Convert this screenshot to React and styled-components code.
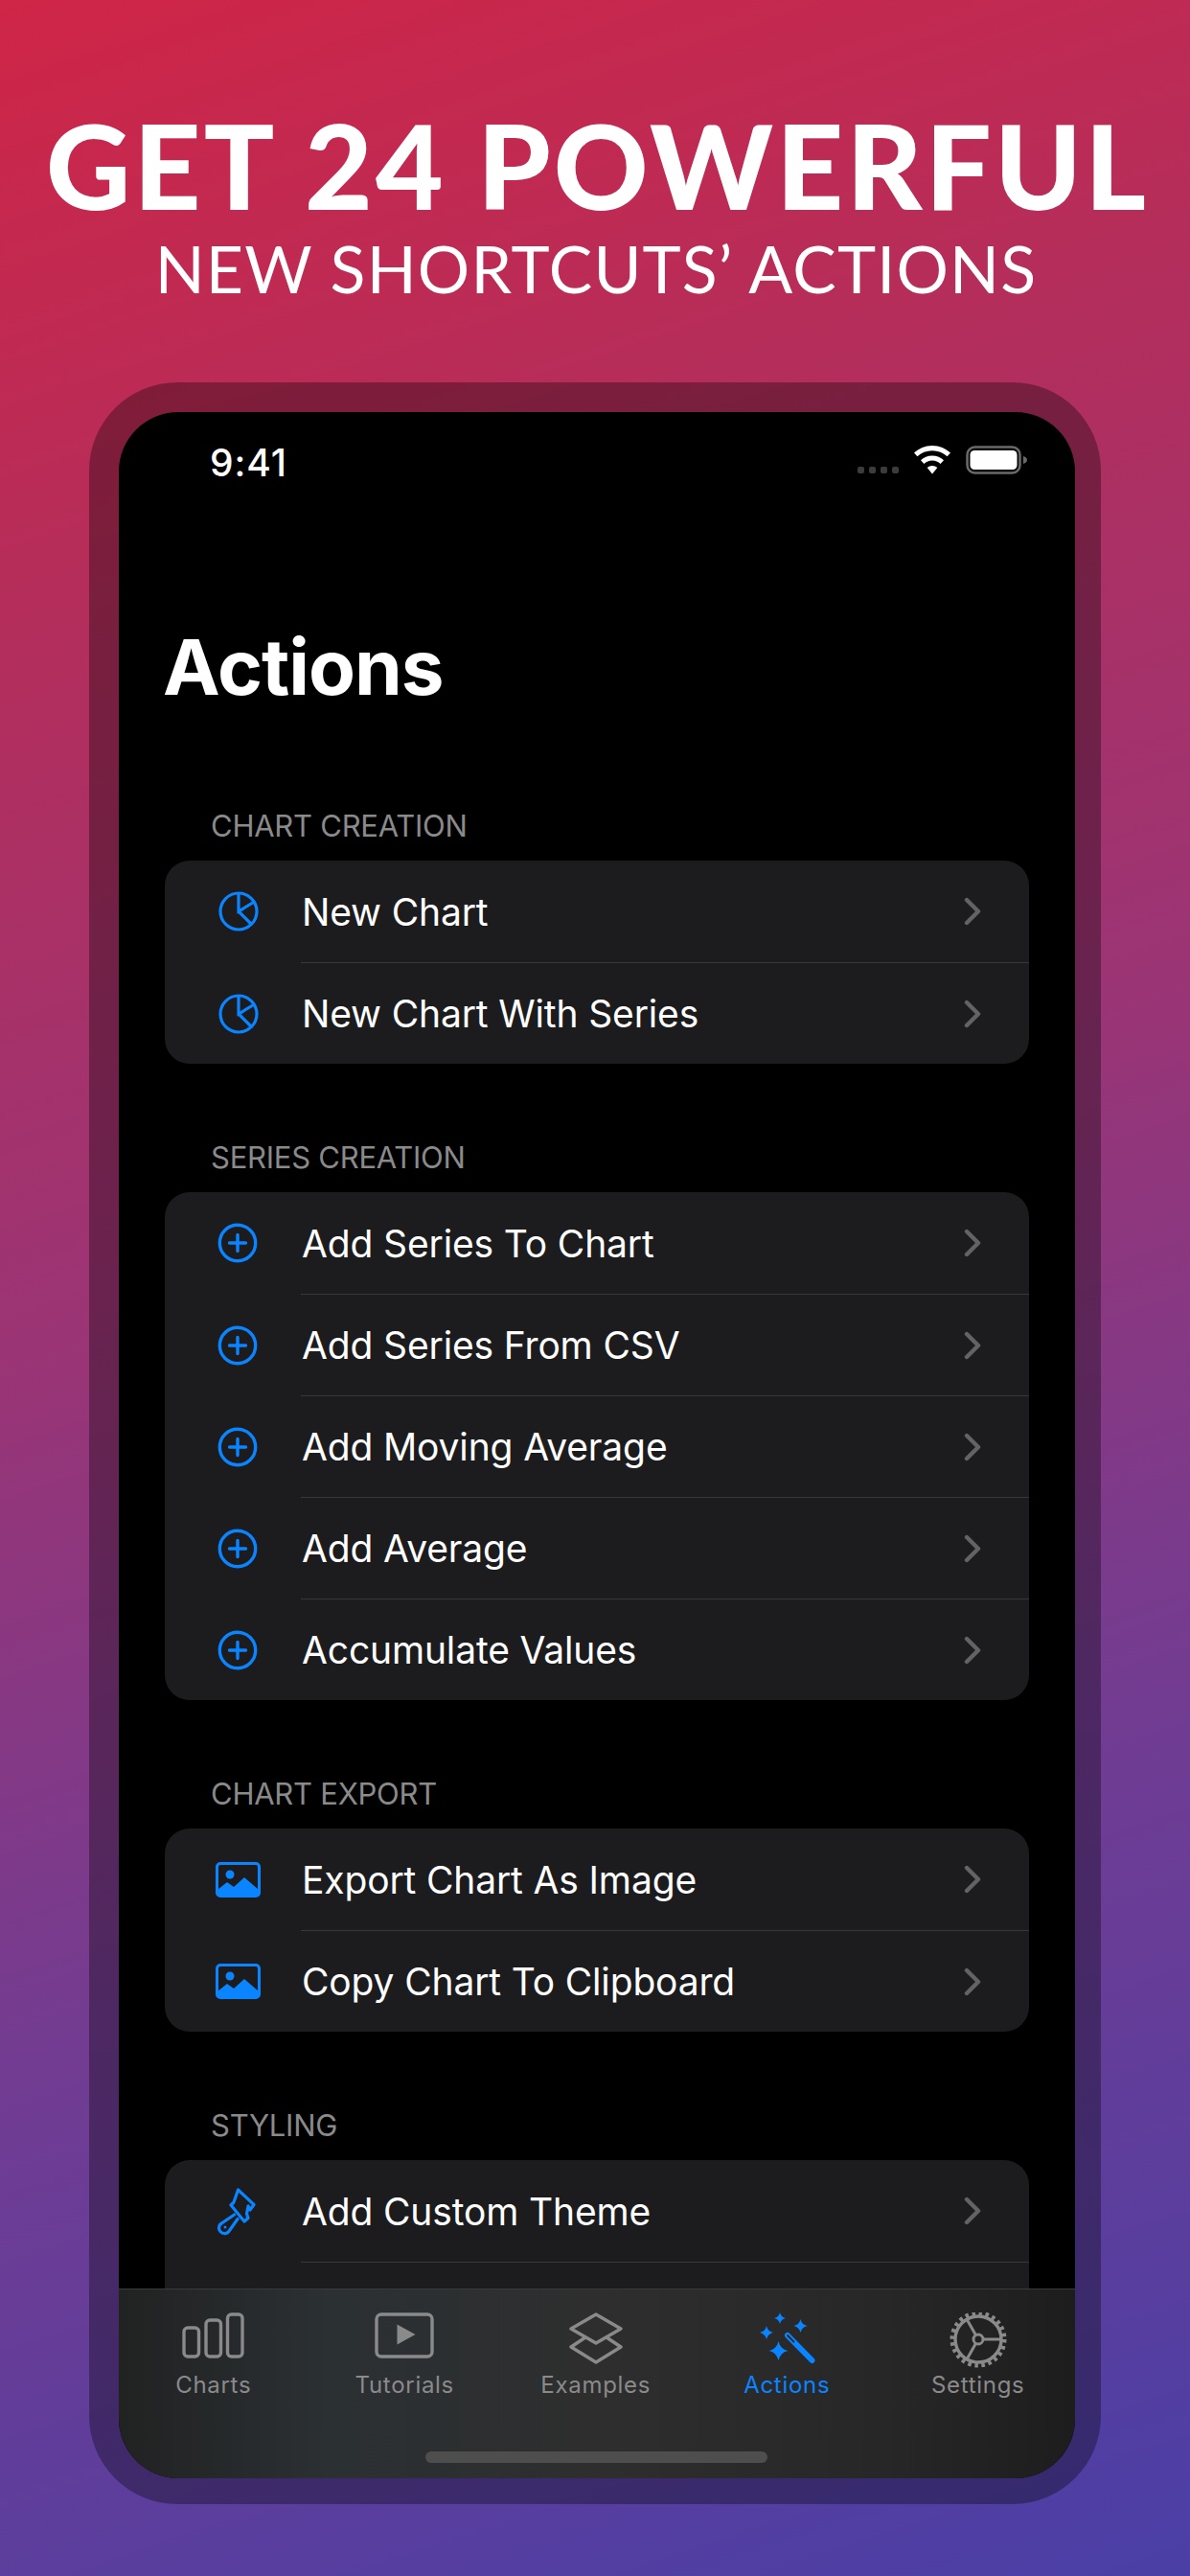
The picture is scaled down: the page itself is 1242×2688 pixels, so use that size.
import React from 'react';
import styled, { createGlobalStyle } from 'styled-components';

const BLUE = '#0a84ff';
const GRAY = '#8a8a8b';

const GlobalStyle = createGlobalStyle`
  html, body {
    margin: 0;
    padding: 0;
    background: #000;
  }
  * {
    box-sizing: border-box;
  }
`;

const Page = styled.div`
  width: 1242px;
  height: 2688px;
  overflow: hidden;
  padding: 122px 93px 0;
  background: linear-gradient(162deg, #cf2547 0%, #b32e5c 22%, #9c3474 45%, #723c92 70%, #4a3fa6 100%);
  font-family: Inter, "Noto Sans", sans-serif;
`;

const Headline = styled.h1`
  margin: 0 -60px;
  padding-left: 5px;
  text-align: center;
  font-family: Lato, sans-serif;
  font-weight: 900;
  font-size: 122px;
  line-height: 100px;
  letter-spacing: 3.2px;
  color: #fff;
  white-space: nowrap;
`;

const Subline = styled.h2`
  margin: 24px -60px 0;
  padding-left: 2px;
  text-align: center;
  font-family: Lato, sans-serif;
  font-weight: 400;
  font-size: 68px;
  line-height: 68px;
  letter-spacing: 1.2px;
  color: #fff;
  white-space: nowrap;
`;

const Frame = styled.div`
  margin-top: 85px;
  width: 1056px;
  height: 2214px;
  padding: 31px 27px 27px 31px;
  border-radius: 92px;
  background: rgba(0, 0, 0, 0.32);
`;

const Screen = styled.div`
  position: relative;
  height: 100%;
  overflow: hidden;
  border-radius: 62px;
  background: #000;
`;

const StatusBar = styled.div`
  display: flex;
  align-items: center;
  height: 104px;
  padding: 0 50px 0 95px;
  color: #fff;
`;

const Clock = styled.span`
  font-size: 39px;
  font-weight: 500;
  letter-spacing: 0.9px;
  flex: 1;
`;

const StatusIcons = styled.div`
  display: flex;
  align-items: center;
  gap: 16px;
  margin-top: -4px;
`;

const SignalDots = styled.div`
  display: flex;
  gap: 5px;
  margin-top: 21px;
`;

const SignalDot = styled.span`
  width: 7px;
  height: 7px;
  border-radius: 2px;
  background: #3c3c3c;
`;

const Title = styled.div`
  margin: 114px 0 0 46px;
  font-size: 80px;
  line-height: 96px;
  font-weight: 700;
  letter-spacing: -1px;
  color: #fff;
`;

const Sections = styled.div`
  padding: 0 48px;
`;

const Section = styled.section`
  margin-top: ${(p) => p.$first ? '84px' : '64px'};
`;

const SectionHeader = styled.div`
  padding: 14px 0 0 48px;
  height: 70px;
  font-size: 31px;
  line-height: 40px;
  letter-spacing: -0.25px;
  color: ${GRAY};
`;

const Card = styled.div`
  border-radius: 26px;
  background: #1c1c1e;
  overflow: hidden;
`;

const Row = styled.div`
  display: flex;
  align-items: center;
  height: 106px;
  padding-left: 53px;
`;

const RowIcon = styled.div`
  width: 89px;
  flex: none;
  display: flex;
  margin-top: ${(p) => p.$first ? '0' : '1px'};
`;

const RowBody = styled.div`
  flex: 1;
  height: 100%;
  display: flex;
  align-items: center;
  padding-right: 50px;
  border-top: ${(p) => p.$first ? 'none' : '1.5px solid #38383a'};
`;

const RowLabel = styled.span`
  flex: 1;
  margin-left: 1px;
  font-size: 39px;
  letter-spacing: -0.15px;
  color: #fff;
`;

const TabBar = styled.nav`
  position: absolute;
  left: 0;
  right: 0;
  bottom: 0;
  height: 198px;
  display: grid;
  grid-template-columns: repeat(5, 199.5px);
  margin-left: -1px;
  padding-top: 24px;
  border-top: 1.5px solid #3a3a3c;
  background: linear-gradient(90deg, #212222 0%, #2b3033 22%, #2e2e2e 50%, #272727 80%, #1d1d1d 100%);
`;

const Tab = styled.div`
  display: flex;
  flex-direction: column;
  align-items: center;
  color: ${(p) => p.$active ? BLUE : GRAY};
`;

const TabGlyph = styled.div`
  height: 61px;
  display: flex;
  align-items: flex-start;
  justify-content: center;
`;

const TabLabel = styled.span`
  font-size: 24px;
  line-height: 30px;
  letter-spacing: 0.7px;
`;

const HomeIndicator = styled.div`
  position: absolute;
  left: 320px;
  bottom: 16px;
  width: 357px;
  height: 12px;
  border-radius: 6px;
  background: #4e4e4e;
`;

const PieIcon = () => (
  <svg width="44" height="44" viewBox="0 0 44 44" fill="none" stroke={BLUE} strokeWidth="3.200" style={{ marginLeft: 2 }}>
    <circle cx="22" cy="22" r="19" />
    <path d="M22 3v19l16.500-10M22 22l13.500 13.500" />
  </svg>
);

const PlusIcon = () => (
  <svg width="44" height="44" viewBox="0 0 44 44" fill="none" stroke={BLUE} strokeWidth="3.400" strokeLinecap="round" style={{ marginLeft: 1 }}>
    <circle cx="22" cy="22" r="18.700" />
    <path d="M22 13.500v17M13.500 22h17" />
  </svg>
);

const PhotoIcon = () => (
  <svg width="47" height="37" viewBox="0 0 47 37">
    <rect x="1.500" y="1.500" width="44" height="34" rx="3.500" fill="none" stroke={BLUE} strokeWidth="3" />
    <circle cx="15" cy="13" r="4.500" fill={BLUE} />
    <path d="M2 29l10-8 7 5 11-10 15 13v5a2 2 0 0 1-2 2H4a2 2 0 0 1-2-2z" fill={BLUE} />
  </svg>
);

const BrushIcon = () => (
  <svg width="60" height="60" viewBox="0 0 60 60" fill="none" stroke={BLUE} strokeWidth="3.200" strokeLinejoin="round" strokeLinecap="round" style={{ marginLeft: -5 }}>
    <path d="M28.500 8L45 23.500l-4 5.500-2-4-1.500 8 1.500 4.500-4 3.500L21 24l3-3z" />
    <path d="M24.500 34L12 42.500a5.800 5.800 0 1 0 7.500 8L28 38.500" />
    <circle cx="15" cy="47" r="1.500" fill={BLUE} stroke="none" />
  </svg>
);

const Chevron = () => (
  <svg width="18" height="30" viewBox="0 0 18 30" fill="none" stroke="#636366" strokeWidth="4.400" strokeLinecap="round" strokeLinejoin="round">
    <path d="M3 3l12 12L3 27" />
  </svg>
);

const WifiIcon = () => (
  <svg width="38" height="30" viewBox="0 0 38 30" fill="#fff">
    <path d="M19 0c7.500 0 14 3 19 7.600l-3.400 3.600C30.500 7.400 25 5.200 19 5.200S7.500 7.400 3.400 11.200L0 7.600C5 3 11.500 0 19 0z" />
    <path d="M19 10.500c4.700 0 8.900 1.800 12 4.800l-3.400 3.600c-2.300-2.100-5.300-3.400-8.600-3.400s-6.300 1.300-8.600 3.400L7 15.300c3.100-3 7.300-4.800 12-4.800z" />
    <path d="M19 21c2.100 0 3.900.8 5.300 2.100L19 29.500l-5.300-6.400C15.100 21.800 16.900 21 19 21z" />
  </svg>
);

const BatteryIcon = () => (
  <svg width="64" height="30" viewBox="0 0 64 30">
    <rect x="1.500" y="1.500" width="55" height="27" rx="8" fill="none" stroke="#6a6a6a" strokeWidth="2.500" />
    <rect x="4.500" y="5" width="49" height="20" rx="4.500" fill="#fff" />
    <path d="M60 11c2.500.8 4 2.200 4 4s-1.500 3.200-4 4z" fill="#6a6a6a" />
  </svg>
);

const ChartsGlyph = () => (
  <svg width="66" height="48" viewBox="0 0 66 48" fill="none" stroke="currentColor" strokeWidth="3.400">
    <rect x="2" y="16" width="15.500" height="30" rx="4" />
    <rect x="25" y="8" width="15.500" height="38" rx="4" />
    <rect x="47.500" y="2" width="15.500" height="44" rx="4" />
  </svg>
);

const TutorialsGlyph = () => (
  <svg width="62" height="48" viewBox="0 0 62 48" fill="none" stroke="currentColor" strokeWidth="3.400">
    <rect x="2" y="2" width="58" height="44" rx="5" />
    <path d="M23.500 12.500l19 10.500-19 10.500z" fill="currentColor" stroke="none" />
  </svg>
);

const ExamplesGlyph = () => (
  <svg width="56" height="54" viewBox="0 0 56 54" fill="none" stroke="currentColor" strokeWidth="3.400" strokeLinejoin="round">
    <path d="M28 2l26 15-26 15L2 17z" />
    <path d="M17 26L2 36l26 16 26-16-15-10" />
  </svg>
);

const Sparkle = ({ x, y, r }) => (
  <path
    d={`M${x} ${y - r}Q${x + r * 0.18} ${y - r * 0.18} ${x + r} ${y}Q${x + r * 0.18} ${y + r * 0.18} ${x} ${y + r}Q${x - r * 0.18} ${y + r * 0.18} ${x - r} ${y}Q${x - r * 0.18} ${y - r * 0.18} ${x} ${y - r}z`}
    fill="currentColor"
  />
);

const ActionsGlyph = () => (
  <svg width="60" height="56" viewBox="0 0 60 56" fill="none">
    <Sparkle x={23} y={6} r={6} />
    <Sparkle x={44.500} y={14} r={7} />
    <Sparkle x={9} y={21} r={7} />
    <Sparkle x={21.500} y={40} r={10} />
    <path d="M31 24l25.500 26" stroke="currentColor" strokeWidth="6" strokeLinecap="round" />
    <path d="M31 24l6.500 6.700" stroke="#282828" strokeWidth="1.800" strokeLinecap="round" />
  </svg>
);

const SettingsGlyph = () => (
  <svg width="60" height="60" viewBox="0 2 60 60" fill="none" stroke="currentColor">
    <circle cx="30" cy="30" r="24" strokeWidth="3.400" />
    <circle cx="30" cy="30" r="27" strokeWidth="5" strokeDasharray="3.500 3.570" />
    <circle cx="30" cy="30" r="5" strokeWidth="3" />
    <path d="M35 30h19M27.500 25.700L18 9M27.500 34.300L18 51" strokeWidth="3" />
  </svg>
);

const sections = [
  {
    title: 'CHART CREATION',
    icon: PieIcon,
    rows: ['New Chart', 'New Chart With Series'],
  },
  {
    title: 'SERIES CREATION',
    icon: PlusIcon,
    rows: ['Add Series To Chart', 'Add Series From CSV', 'Add Moving Average', 'Add Average', 'Accumulate Values'],
  },
  {
    title: 'CHART EXPORT',
    icon: PhotoIcon,
    rows: ['Export Chart As Image', 'Copy Chart To Clipboard'],
  },
  {
    title: 'STYLING',
    icon: BrushIcon,
    rows: ['Add Custom Theme', ''],
  },
];

const tabs = [
  { label: 'Charts', glyph: ChartsGlyph },
  { label: 'Tutorials', glyph: TutorialsGlyph },
  { label: 'Examples', glyph: ExamplesGlyph },
  { label: 'Actions', glyph: ActionsGlyph, active: true },
  { label: 'Settings', glyph: SettingsGlyph },
];

const App = () => {
  return (
    <Page>
      <GlobalStyle />
      <Headline>GET 24 POWERFUL</Headline>
      <Subline>NEW SHORTCUTS’ ACTIONS</Subline>
      <Frame>
        <Screen>
          <StatusBar>
            <Clock>9:41</Clock>
            <StatusIcons>
              <SignalDots>
                <SignalDot />
                <SignalDot />
                <SignalDot />
                <SignalDot />
              </SignalDots>
              <WifiIcon />
              <BatteryIcon />
            </StatusIcons>
          </StatusBar>
          <Title>Actions</Title>
          <Sections>
            {sections.map((section, s) => (
              <Section key={section.title} $first={s === 0}>
                <SectionHeader>{section.title}</SectionHeader>
                <Card>
                  {section.rows.map((label, i) => (
                    <Row key={label || 'more'}>
                      <RowIcon $first={i === 0}>{label && <section.icon />}</RowIcon>
                      <RowBody $first={i === 0}>
                        <RowLabel>{label}</RowLabel>
                        {label && <Chevron />}
                      </RowBody>
                    </Row>
                  ))}
                </Card>
              </Section>
            ))}
          </Sections>
          <TabBar>
            {tabs.map((tab) => (
              <Tab key={tab.label} $active={tab.active}>
                <TabGlyph>
                  <tab.glyph />
                </TabGlyph>
                <TabLabel>{tab.label}</TabLabel>
              </Tab>
            ))}
          </TabBar>
          <HomeIndicator />
        </Screen>
      </Frame>
    </Page>
  );
};

export default App;
